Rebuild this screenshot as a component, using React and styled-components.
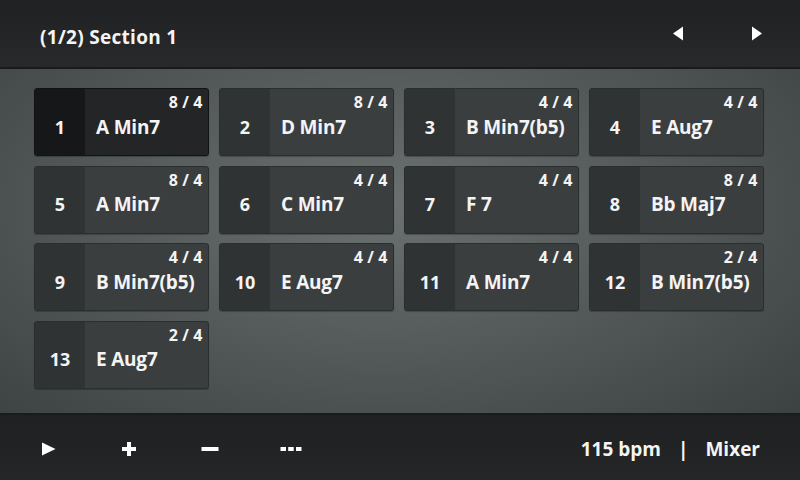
import React from "react";
import styled, { createGlobalStyle } from "styled-components";

const Global = createGlobalStyle`
  html, body { margin: 0; padding: 0; background: #222425; }
  body { font-family: "Open Sans", "Noto Sans", sans-serif; }
  #root { width: 800px; height: 480px; }
`;

const Screen = styled.div`
  width: 800px;
  height: 480px;
  display: flex;
  flex-direction: column;
  overflow: hidden;
  color: #f4f4f4;
  font-weight: 700;
`;

const Header = styled.div`
  flex: none;
  display: flex;
  align-items: center;
  padding: 0 36px 0 40px;
  background: linear-gradient(180deg, #1f2122 0%, #27292a 100%);
  border-bottom: 2px solid #191a1b;
  box-sizing: border-box;
  height: 69px;
`;

const Title = styled.div`
  font-size: 19px;
  letter-spacing: 0.3px;
  flex: 1;
  margin-top: 6px;
`;

const NavButton = styled.button`
  border: 0;
  background: none;
  padding: 0;
  width: 14px;
  height: 16px;
  display: flex;
  align-items: center;
  justify-content: center;
  margin-left: ${(p) => p.$gap}px;
`;

const Body = styled.div`
  flex: 1;
  background: radial-gradient(ellipse 70% 85% at 48% 40%, #6a7170 0%, #565c5c 45%, #3d4243 100%);
  padding: 19px 0 0 34px;
`;

const Grid = styled.div`
  display: grid;
  grid-template-columns: repeat(4, 175px);
  grid-auto-rows: 68px;
  column-gap: 10px;
  row-gap: 9.5px;
`;

const Card = styled.div`
  display: flex;
  border-radius: 3px;
  border: 1px solid ${(p) => (p.$active ? "#121314" : "#2b2e2f")};
  background: ${(p) => (p.$active ? "#232526" : "#3b3e3f")};
  box-shadow: 0 1px 1px rgba(0,0,0,0.25);
  overflow: hidden;
  box-sizing: border-box;
`;

const Num = styled.div`
  width: 50px;
  flex: none;
  display: flex;
  align-items: center;
  justify-content: center;
  padding-top: 9px;
  box-sizing: border-box;
  font-size: 18px;
  background: ${(p) => (p.$active ? "#161718" : "#303334")};
`;

const Main = styled.div`
  flex: 1;
  position: relative;
  display: flex;
  align-items: center;
  padding: 9px 0 0 11px;
`;

const Chord = styled.div`
  font-size: 19px;
  letter-spacing: -0.2px;
`;

const Sig = styled.div`
  position: absolute;
  right: 5px;
  top: 2px;
  font-size: 16px;
  letter-spacing: 0.6px;
  word-spacing: -1px;
`;

const Footer = styled.div`
  height: 67px;
  flex: none;
  display: flex;
  align-items: center;
  padding: 0 40px 0 37px;
  background: linear-gradient(180deg, #1e2021 0%, #242627 100%);
  border-top: 2px solid #1a1b1c;
  box-sizing: border-box;
`;

const Tool = styled.button`
  border: 0;
  background: none;
  padding: 0;
  width: 22px;
  height: 20px;
  display: flex;
  align-items: center;
  justify-content: center;
  margin-right: 59px;
  margin-top: 2px;
`;

const Spacer = styled.div`
  flex: 1;
`;

const Status = styled.div`
  font-size: 19px;
  display: flex;
  align-items: center;
  gap: 17px;
  margin-top: 2px;
`;

const bars = [
  ["1", "A Min7", "8 / 4"],
  ["2", "D Min7", "8 / 4"],
  ["3", "B Min7(b5)", "4 / 4"],
  ["4", "E Aug7", "4 / 4"],
  ["5", "A Min7", "8 / 4"],
  ["6", "C Min7", "4 / 4"],
  ["7", "F 7", "4 / 4"],
  ["8", "Bb Maj7", "8 / 4"],
  ["9", "B Min7(b5)", "4 / 4"],
  ["10", "E Aug7", "4 / 4"],
  ["11", "A Min7", "4 / 4"],
  ["12", "B Min7(b5)", "2 / 4"],
  ["13", "E Aug7", "2 / 4"],
];

export default function App() {
  return (
    <Screen>
      <Global />
      <Header>
        <Title>(1/2) Section 1</Title>
        <NavButton $gap={0}>
          <svg width="12" height="15" viewBox="0 0 12 15"><path d="M11 0.5 L1 7.5 L11 14.5 Z" fill="#fff" /></svg>
        </NavButton>
        <NavButton $gap={65}>
          <svg width="12" height="15" viewBox="0 0 12 15"><path d="M1 0.5 L11 7.5 L1 14.5 Z" fill="#fff" /></svg>
        </NavButton>
      </Header>
      <Body>
        <Grid>
          {bars.map(([n, c, s], i) => (
            <Card key={n} $active={i === 0}>
              <Num $active={i === 0}>{n}</Num>
              <Main>
                <Chord>{c}</Chord>
                <Sig>{s}</Sig>
              </Main>
            </Card>
          ))}
        </Grid>
      </Body>
      <Footer>
        <Tool>
          <svg width="16" height="16" viewBox="0 0 16 16"><path d="M2 1.5 L15.5 8 L2 14.5 Z" fill="#fff" /></svg>
        </Tool>
        <Tool>
          <svg width="16" height="16" viewBox="0 0 16 16"><path d="M6 1 H10 V6 H15 V10 H10 V15 H6 V10 H1 V6 H6 Z" fill="#fff" /></svg>
        </Tool>
        <Tool>
          <svg width="18" height="16" viewBox="0 0 18 16"><rect x="0.5" y="6" width="17" height="4" fill="#fff" /></svg>
        </Tool>
        <Tool>
          <svg width="22" height="16" viewBox="0 0 22 16"><rect x="0.5" y="6" width="5.5" height="4" fill="#fff" /><rect x="8.2" y="6" width="5.5" height="4" fill="#fff" /><rect x="16" y="6" width="5.5" height="4" fill="#fff" /></svg>
        </Tool>
        <Spacer />
        <Status>
          <span>115 bpm</span>
          <span>|</span>
          <span>Mixer</span>
        </Status>
      </Footer>
    </Screen>
  );
}
